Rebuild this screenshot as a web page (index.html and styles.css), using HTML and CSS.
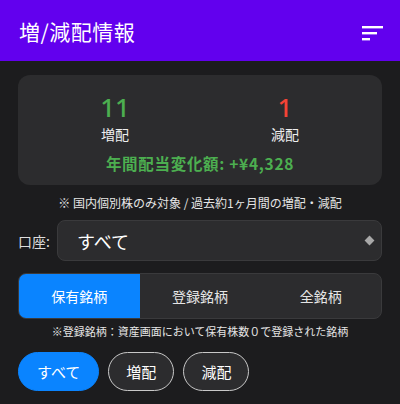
FILE: index.html
```html
<!DOCTYPE html>
<html lang="ja">
<head>
    <meta charset="UTF-8">
    <link rel="stylesheet" href="styles.css">
</head>
<body>
    <div class="app-bar">
        <div class="app-title">増/減配情報</div>
        <svg class="sort-icon" width="22" height="16" viewBox="0 0 22 16">
            <rect x="0" y="0" width="21" height="2.4" fill="#fff"/>
            <rect x="0" y="6" width="15" height="2.4" fill="#fff"/>
            <rect x="0" y="12" width="8" height="2.4" fill="#fff"/>
        </svg>
    </div>

    <div class="content">
        <div class="summary-card">
            <div class="summary-row">
                <div class="summary-item">
                    <div class="count up">11</div>
                    <div class="count-label">増配</div>
                </div>
                <div class="summary-item">
                    <div class="count down">1</div>
                    <div class="count-label">減配</div>
                </div>
            </div>
            <div class="change-total">年間配当変化額: +¥4,328</div>
        </div>

        <div class="note">※ 国内個別株のみ対象 / 過去約1ヶ月間の増配・減配</div>

        <div class="account-row">
            <div class="account-label">口座:</div>
            <div class="select-box">
                <span>すべて</span>
                <span class="diamond"></span>
            </div>
        </div>

        <div class="segment">
            <div class="segment-item active">保有銘柄</div>
            <div class="segment-item">登録銘柄</div>
            <div class="segment-item">全銘柄</div>
        </div>

        <div class="note small">※登録銘柄：資産画面において保有株数０で登録された銘柄</div>

        <div class="pills">
            <div class="pill active">すべて</div>
            <div class="pill">増配</div>
            <div class="pill">減配</div>
        </div>
    </div>
</body>
</html>
```

FILE: styles.css
```css
body {
    margin: 0;
    background-color: #1c1c1e;
    color: #fff;
    font-family: "Noto Sans CJK JP", "Noto Sans", sans-serif;
}
.app-bar {
    height: 61px;
    background-color: #6200ee;
    display: flex;
    align-items: center;
    justify-content: space-between;
    padding: 0 16px 0 19px;
}
.app-title {
    font-size: 21px;
    letter-spacing: 0.5px;
}
.sort-icon {
    margin-top: 6px;
}
.content {
    padding: 14px 18px 0 18px;
}
.summary-card {
    background: #2c2c2e;
    border-radius: 12px;
    height: 110px;
    box-sizing: border-box;
    padding-top: 14px;
}
.summary-row {
    display: flex;
}
.summary-item {
    flex: 1;
    text-align: center;
}
.summary-item:first-child {
    padding-left: 12px;
}
.summary-item:last-child {
    padding-right: 12px;
}
.count {
    font-family: "Noto Sans", sans-serif;
    font-size: 26px;
    font-weight: 500;
    line-height: 37px;
}
.count.up {
    color: #4caf50;
}
.count.down {
    color: #f44336;
}
.count-label {
    font-size: 14px;
    line-height: 17px;
    color: #eee;
}
.change-total {
    text-align: center;
    color: #4caf50;
    font-weight: bold;
    font-size: 15.5px;
    margin-top: 9px;
    letter-spacing: 0.7px;
}
.note {
    text-align: center;
    font-size: 12px;
    color: #e5e5e5;
    margin-top: 10px;
    line-height: 16px;
}
.note.small {
    font-size: 11px;
    margin-top: 4px;
}
.account-row {
    display: flex;
    align-items: center;
    margin-top: 9px;
}
.account-label {
    font-size: 14px;
    width: 39px;
    color: #ddd;
}
.select-box {
    flex: 1;
    height: 39px;
    background: #2c2c2e;
    border: 1px solid #3a3a3c;
    border-radius: 8px;
    display: flex;
    align-items: center;
    justify-content: space-between;
    padding: 0 8px 0 19px;
    font-size: 18px;
}
.diamond {
    width: 7px;
    height: 7px;
    background: #a8a8a8;
    transform: rotate(45deg);
}
.segment {
    display: flex;
    margin-top: 12px;
    height: 44px;
    background: #2c2c2e;
    border: 1px solid #3a3a3c;
    border-radius: 8px;
    overflow: hidden;
}
.segment-item {
    flex: 1;
    display: flex;
    align-items: center;
    justify-content: center;
    font-size: 14px;
    color: #e5e5e5;
}
.segment-item.active {
    background: #0a84ff;
    color: #fff;
}
.pills {
    display: flex;
    gap: 9px;
    margin-top: 13px;
}
.pill {
    height: 39px;
    box-sizing: border-box;
    padding: 0 17px;
    border: 1.5px solid #c8c8c8;
    border-radius: 20px;
    background: #2c2c2e;
    display: flex;
    align-items: center;
    font-size: 15px;
}
.pill.active {
    background: #0a84ff;
    border-color: #0a84ff;
    padding: 0 18px;
}
```
